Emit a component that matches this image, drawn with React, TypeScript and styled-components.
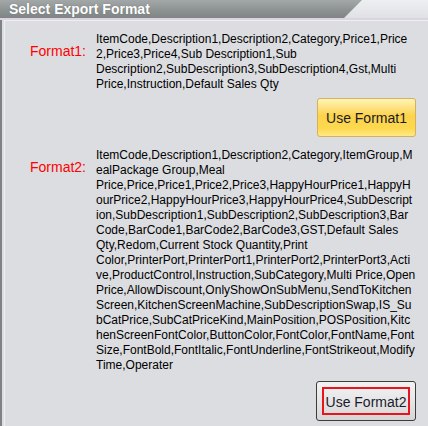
import React from 'react';
import styled, { createGlobalStyle } from 'styled-components';

const GlobalStyle = createGlobalStyle`
   html, body {
      margin: 0;
      padding: 0;
      background: #dcdde1;
   }
   body {
      font-family: "Liberation Sans", Arial, sans-serif;
   }
`;

type FormatType = {
   label: string;
   lines: string[];
   button: string;
   variant: 'yellow' | 'focus';
};

const formats: FormatType[] = [
   {
      label: 'Format1:',
      lines: [
         'ItemCode,Description1,Description2,Category,Price1,Price',
         '2,Price3,Price4,Sub Description1,Sub',
         'Description2,SubDescription3,SubDescription4,Gst,Multi',
         'Price,Instruction,Default Sales Qty',
      ],
      button: 'Use Format1',
      variant: 'yellow',
   },
   {
      label: 'Format2:',
      lines: [
         'ItemCode,Description1,Description2,Category,ItemGroup,M',
         'ealPackage Group,Meal',
         'Price,Price,Price1,Price2,Price3,HappyHourPrice1,HappyH',
         'ourPrice2,HappyHourPrice3,HappyHourPrice4,SubDescript',
         'ion,SubDescription1,SubDescription2,SubDescription3,Bar',
         'Code,BarCode1,BarCode2,BarCode3,GST,Default Sales',
         'Qty,Redom,Current Stock Quantity,Print',
         'Color,PrinterPort,PrinterPort1,PrinterPort2,PrinterPort3,Acti',
         've,ProductControl,Instruction,SubCategory,Multi Price,Open',
         'Price,AllowDiscount,OnlyShowOnSubMenu,SendToKitchen',
         'Screen,KitchenScreenMachine,SubDescriptionSwap,IS_Su',
         'bCatPrice,SubCatPriceKind,MainPosition,POSPosition,Kitc',
         'henScreenFontColor,ButtonColor,FontColor,FontName,Font',
         'Size,FontBold,FontItalic,FontUnderline,FontStrikeout,Modify',
         'Time,Operater',
      ],
      button: 'Use Format2',
      variant: 'focus',
   },
];

export default function App() {
   return (
      <>
         <GlobalStyle />
         <Window>
            <Header>
               <HeaderTab>Select Export Format</HeaderTab>
            </Header>
            <Body>
               <Panel>
                  {formats.map((f) => (
                     <Section key={f.label}>
                        <FormatRow>
                           <Label>{f.label}</Label>
                           <Fields>
                              {f.lines.map((line, i) => (
                                 <Line key={i}>{line}</Line>
                              ))}
                           </Fields>
                        </FormatRow>
                        <ButtonRow>
                           <ExportButton $variant={f.variant}>
                              <ButtonText $focus={f.variant === 'focus'}>{f.button}</ButtonText>
                           </ExportButton>
                        </ButtonRow>
                     </Section>
                  ))}
               </Panel>
            </Body>
         </Window>
      </>
   );
}

const Window = styled.div`
   width: 428px;
   height: 426px;
   overflow: hidden;
   display: flex;
   flex-direction: column;
   background: #dcdde1;
`;

const Header = styled.div`
   height: 18px;
   background: linear-gradient(to bottom, #eeeff1, #e0e1e5);
   border-bottom: 2px solid #dcd4e2;
   display: flex;
`;

const HeaderTab = styled.div`
   width: 362px;
   height: 18px;
   box-sizing: border-box;
   padding: 1px 0 0 9px;
   background: linear-gradient(to bottom, #a3a7a7, #8b9191 60%, #7f8585);
   clip-path: polygon(0 0, 100% 0, calc(100% - 18px) 100%, 0 100%);
   color: #ffffff;
   font-size: 14px;
   font-weight: bold;
   line-height: 16px;
   text-shadow: 0 0 1px rgba(60, 60, 60, 0.5);
`;

const Body = styled.div`
   flex: 1;
   border-left: 2px solid #7e8283;
   padding: 0 0 0 2px;
   display: flex;
`;

const Panel = styled.div`
   flex: 1;
   border-top: 1px solid #eeeef3;
   border-left: 1px solid #eeeef3;
   padding: 11px 12px 0 0;
   display: flex;
   flex-direction: column;
   gap: 11px;
`;

const Section = styled.div`
   display: flex;
   flex-direction: column;
   gap: 6px;

   &:last-child {
      gap: 8px;
   }
`;

const FormatRow = styled.div`
   display: flex;
   gap: 10px;
`;

const Label = styled.div`
   width: 81px;
   flex-shrink: 0;
   text-align: right;
   color: #ff0000;
   font-size: 14px;
   line-height: 16px;
   padding-top: 11px;
`;

const Fields = styled.div`
   display: flex;
   flex-direction: column;
   font-size: 12px;
   line-height: 15px;
   color: #000000;
`;

const Line = styled.div`
   white-space: nowrap;
`;

const ButtonRow = styled.div`
   display: flex;
   justify-content: flex-end;
`;

const ExportButton = styled.div<{ $variant: 'yellow' | 'focus' }>`
   width: ${(p) => (p.$variant === 'focus' ? '100px' : '99px')};
   height: ${(p) => (p.$variant === 'focus' ? '40px' : '39px')};
   box-sizing: border-box;
   border-radius: 3px;
   display: flex;
   align-items: center;
   justify-content: center;
   padding: ${(p) => (p.$variant === 'focus' ? '5px' : '0')};
   border: 1px solid ${(p) => (p.$variant === 'yellow' ? '#d4b15a' : '#3c3c3c')};
   background: ${(p) =>
      p.$variant === 'yellow'
         ? 'linear-gradient(to bottom, #fff4b8 0%, #ffe58a 20%, #fcd34a 45%, #fdd950 80%, #ffe888 100%)'
         : 'linear-gradient(to bottom, #f2f2f2 0%, #e6e6e6 50%, #d6d6d6 100%)'};
`;

const ButtonText = styled.div<{ $focus: boolean }>`
   flex: 1;
   align-self: stretch;
   display: flex;
   align-items: center;
   justify-content: center;
   box-sizing: border-box;
   border: ${(p) => (p.$focus ? '2px solid #e8141e' : 'none')};
   font-size: 14px;
   color: #1a1a2e;
   padding-top: 1px;
`;
